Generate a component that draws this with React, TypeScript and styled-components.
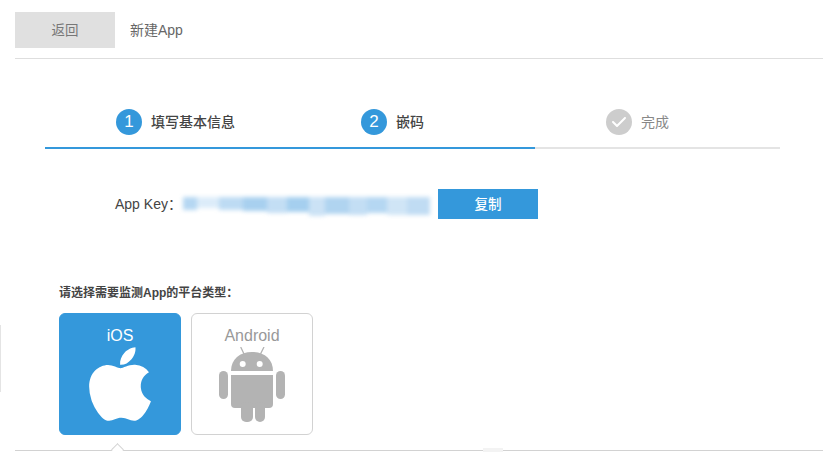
import React from 'react';
import styled, { createGlobalStyle } from 'styled-components';
import { FaApple } from 'react-icons/fa';
import { FaCheck } from 'react-icons/fa6';

const GlobalStyle = createGlobalStyle`
  html, body {
    margin: 0;
    padding: 0;
    background: #fff;
    font-family: "Liberation Sans", "Noto Sans CJK SC", sans-serif;
    overflow: hidden;
  }
`;

const Page = styled.div`
  position: relative;
  width: 823px;
  height: 464px;
  overflow: hidden;
  padding: 12px 0 0 15px;
  box-sizing: border-box;
`;

const Header = styled.div`
  display: flex;
  align-items: flex-start;
  height: 46px;
  border-bottom: 1px solid #dedede;
`;

const BackButton = styled.button`
  width: 100px;
  height: 36px;
  border: 0;
  padding: 0 0 2px;
  background: #e0e0e0;
  color: #777;
  font: inherit;
  font-size: 13.5px;
`;

const HeaderTitle = styled.span`
  margin-left: 15px;
  line-height: 36px;
  font-size: 14px;
  color: #666;
`;

const Steps = styled.div`
  display: flex;
  width: 735px;
  margin: 50px 0 0 30px;
`;

const Step = styled.div<{ $state: 'done' | 'todo' }>`
  display: flex;
  align-items: center;
  width: 174px;
  height: 26px;
  padding: 0 0 12px 71px;
  border-bottom: 2px solid ${(p) => (p.$state === 'done' ? '#3498db' : '#e4e4e4')};
  color: ${(p) => (p.$state === 'done' ? '#444' : '#888')};
  font-size: 14px;
  line-height: 24px;
  font-weight: ${(p) => (p.$state === 'done' ? 500 : 400)};
`;

const StepCircle = styled.span<{ $state: 'done' | 'todo' }>`
  display: flex;
  align-items: center;
  justify-content: center;
  flex: none;
  width: 26px;
  height: 26px;
  margin-right: 9px;
  border-radius: 50%;
  background: ${(p) => (p.$state === 'done' ? '#3498db' : '#cdcdcd')};
  color: #fff;
  font-size: 17px;
  font-weight: 400;
`;

const StepLabel = styled.span`
  margin-top: -1px;
`;

const KeyRow = styled.div`
  display: flex;
  align-items: center;
  height: 30px;
  margin: 40px 0 0 100px;
`;

const KeyLabel = styled.span`
  width: 68px;
  flex: none;
  font-size: 14px;
  color: #444;
  margin-bottom: 3px;
  white-space: nowrap;
`;

const BlurredKey = styled.div`
  display: flex;
  align-items: flex-start;
  width: 247px;
  height: 18px;
  flex: none;
  filter: blur(2px);
  margin-top: 4px;
`;

const KeyChunk = styled.span<{ $w: number; $h: number; $c: string }>`
  display: block;
  width: ${(p) => p.$w}px;
  height: ${(p) => p.$h}px;
  background: ${(p) => p.$c};
`;

const CopyButton = styled.button`
  width: 100px;
  height: 30px;
  margin-left: 8px;
  border: 0;
  padding: 0 0 2px;
  background: #3498db;
  color: #fff;
  font: inherit;
  font-size: 13.5px;
  font-weight: 500;
`;

const PlatformTitle = styled.div`
  margin: 66px 0 0 44px;
  height: 17px;
  line-height: 17px;
  font-size: 12px;
  font-weight: 700;
  color: #444;
`;

const CardRow = styled.div`
  display: flex;
  gap: 10px;
  margin: 11px 0 0 44px;
`;

const PlatformCard = styled.div<{ $active?: boolean }>`
  display: flex;
  flex-direction: column;
  align-items: center;
  box-sizing: border-box;
  width: 122px;
  height: 122px;
  padding-top: 12px;
  border-radius: 6px;
  border: 1px solid ${(p) => (p.$active ? '#3498db' : '#d2d2d2')};
  background: ${(p) => (p.$active ? '#3498db' : '#fff')};
  color: ${(p) => (p.$active ? '#fff' : '#999')};
  font-size: 16px;
  line-height: 20px;
`;

const AppleIcon = styled(FaApple)`
  width: 72px;
  height: 84px;
  margin-top: -4px;
  color: #fff;
`;

const AndroidSvg = styled.svg`
  width: 66px;
  height: 76px;
  margin-top: 1px;
`;

const BottomLine = styled.div`
  margin-top: 15px;
  height: 1px;
  background: #d2d2d2;
`;

const Caret = styled.span`
  position: absolute;
  left: 113px;
  top: 445px;
  width: 9px;
  height: 9px;
  box-sizing: border-box;
  background: #fff;
  border-top: 1px solid #d2d2d2;
  border-left: 1px solid #d2d2d2;
  transform: rotate(45deg);
`;

const ScrollMark = styled.span`
  position: absolute;
  left: 483px;
  top: 448px;
  width: 20px;
  height: 4px;
  background: #f3f3f3;
`;

const EdgeMark = styled.span`
  position: absolute;
  left: 0;
  top: 325px;
  width: 1px;
  height: 67px;
  background: #e4e4e4;
`;

const keyChunks = [
  { w: 14, h: 13, c: '#b5d7f2' },
  { w: 22, h: 11, c: '#dcecf9' },
  { w: 24, h: 13, c: '#bddbf3' },
  { w: 24, h: 14, c: '#a8d0ef' },
  { w: 20, h: 16, c: '#c3def4' },
  { w: 22, h: 15, c: '#a5cfef' },
  { w: 16, h: 19, c: '#cbe2f5' },
  { w: 24, h: 17, c: '#b0d4f0' },
  { w: 18, h: 18, c: '#c3def4' },
  { w: 20, h: 16, c: '#b5d7f2' },
  { w: 20, h: 18, c: '#d0e5f6' },
  { w: 23, h: 18, c: '#c0dcf3' },
];

const AndroidIcon = () => (
  <AndroidSvg viewBox="0 0 66 76" fill="#b3b3b3">
    <path d="M25 7 L21.700 0 M41.500 7 L45 0" stroke="#b3b3b3" strokeWidth="1.300" />
    <path d="M12 24 C12 12 21 5 33 5 C45 5 54 12 54 24 Z" />
    <circle cx="23.700" cy="17" r="3" fill="#fff" />
    <circle cx="40.700" cy="17" r="3" fill="#fff" />
    <path d="M12 28 H54 V57 A4 4 0 0 1 50 61 H16 A4 4 0 0 1 12 57 Z" />
    <rect x="0" y="24" width="9" height="28" rx="4.500" />
    <rect x="57" y="24" width="9" height="28" rx="4.500" />
    <rect x="22" y="55" width="12" height="20" rx="5" />
    <rect x="36" y="55" width="10" height="20" rx="5" />
  </AndroidSvg>
);

const App = () => (
  <Page>
    <GlobalStyle />
    <Header>
      <BackButton>返回</BackButton>
      <HeaderTitle>新建App</HeaderTitle>
    </Header>

    <Steps>
      <Step $state="done">
        <StepCircle $state="done">1</StepCircle>
        <StepLabel>填写基本信息</StepLabel>
      </Step>
      <Step $state="done">
        <StepCircle $state="done">2</StepCircle>
        <StepLabel>嵌码</StepLabel>
      </Step>
      <Step $state="todo">
        <StepCircle $state="todo">
          <FaCheck size={16} />
        </StepCircle>
        <StepLabel>完成</StepLabel>
      </Step>
    </Steps>

    <KeyRow>
      <KeyLabel>App Key：</KeyLabel>
      <BlurredKey>
        {keyChunks.map((chunk, i) => (
          <KeyChunk key={i} $w={chunk.w} $h={chunk.h} $c={chunk.c} />
        ))}
      </BlurredKey>
      <CopyButton>复制</CopyButton>
    </KeyRow>

    <PlatformTitle>请选择需要监测App的平台类型：</PlatformTitle>
    <CardRow>
      <PlatformCard $active>
        iOS
        <AppleIcon />
      </PlatformCard>
      <PlatformCard>
        Android
        <AndroidIcon />
      </PlatformCard>
    </CardRow>
    <BottomLine />

    <Caret />
    <ScrollMark />
    <EdgeMark />
  </Page>
);

export default App;
